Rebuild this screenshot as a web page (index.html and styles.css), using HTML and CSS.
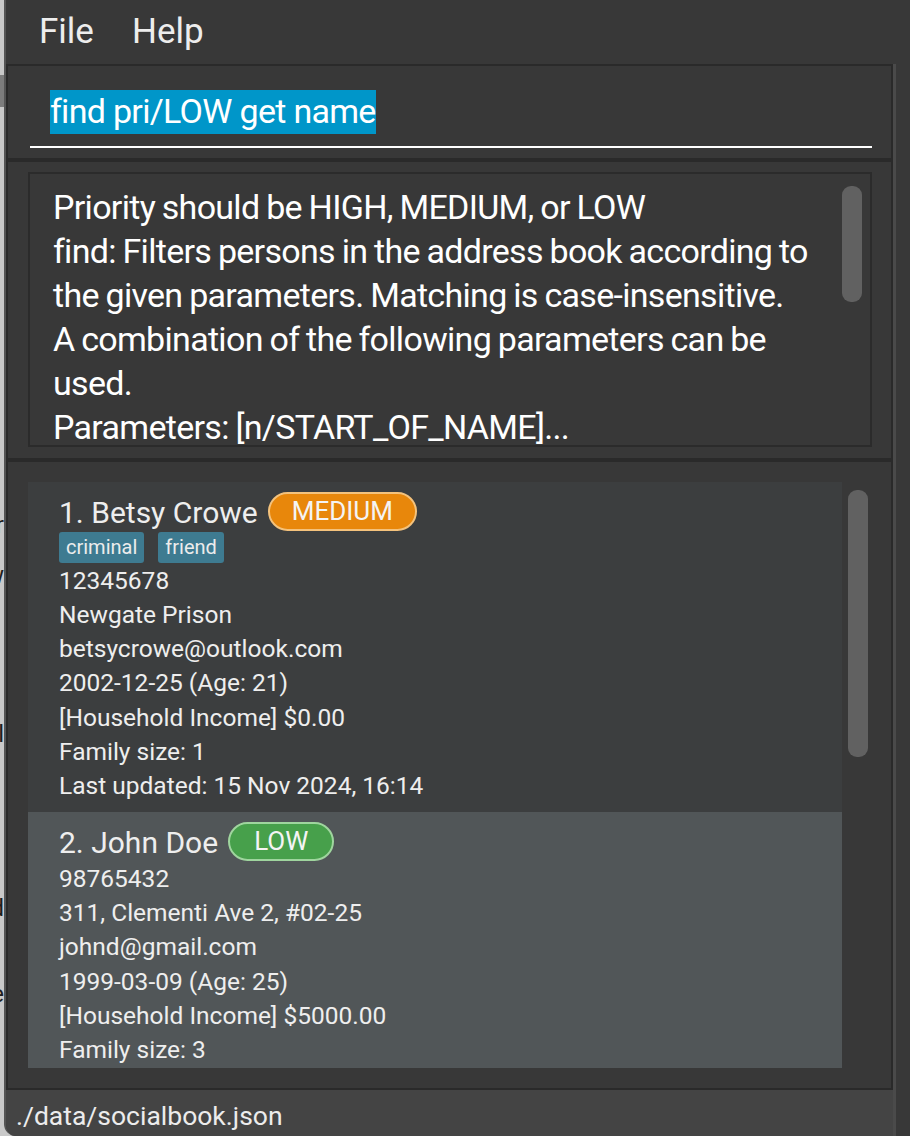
FILE: index.html
```html
<!DOCTYPE html>
<html>
<head>
<meta charset="utf-8">
<link rel="stylesheet" href="styles.css">
</head>
<body>
<div class="desk">
  <div class="behind">
    <div class="behind-block"></div>
    <div class="behind-line l1">er</div>
    <div class="behind-line l2">w</div>
    <div class="behind-line l3">l</div>
    <div class="behind-line l4">d</div>
    <div class="behind-line l5">e</div>
  </div>
  <div class="window">
    <div class="menubar">
      <span class="menu-item">File</span>
      <span class="menu-item">Help</span>
    </div>
    <div class="body-row">
      <div class="main">
        <div class="panels">
          <div class="cmd-panel">
            <div class="cmd-field"><span class="cmd-sel">find pri/LOW get name</span></div>
          </div>
          <div class="sep"></div>
          <div class="result-panel">
            <div class="result-box">
              <div class="result-text">Priority should be HIGH, MEDIUM, or LOW<br>find: Filters persons in the address book according to<br>the given parameters. Matching is case-insensitive.<br>A combination of the following parameters can be<br>used.<br>Parameters: [n/START_OF_NAME]...<br>[pri/PRIORITY]... [inc/INCOME]... [fs/FAMILY_SIZE]...<br>Example: find n/alice pri/HIGH</div>
              <div class="scroll-track"><div class="thumb result-thumb"></div></div>
            </div>
          </div>
          <div class="sep"></div>
          <div class="list-panel">
            <div class="list-view">
              <div class="cards">
                <div class="card even">
                  <div class="name-row"><span class="name">1. Betsy Crowe</span><span class="badge medium">MEDIUM</span></div>
                  <div class="tags"><span class="tag">criminal</span><span class="tag">friend</span></div>
                  <div class="lines">
                    <div class="line">12345678</div>
                    <div class="line">Newgate Prison</div>
                    <div class="line">betsycrowe@outlook.com</div>
                    <div class="line">2002-12-25 (Age: 21)</div>
                    <div class="line">[Household Income] $0.00</div>
                    <div class="line">Family size: 1</div>
                    <div class="line">Last updated: 15 Nov 2024, 16:14</div>
                  </div>
                </div>
                <div class="card odd">
                  <div class="name-row"><span class="name">2. John Doe</span><span class="badge low">LOW</span></div>
                  <div class="lines">
                    <div class="line">98765432</div>
                    <div class="line">311, Clementi Ave 2, #02-25</div>
                    <div class="line">johnd@gmail.com</div>
                    <div class="line">1999-03-09 (Age: 25)</div>
                    <div class="line">[Household Income] $5000.00</div>
                    <div class="line">Family size: 3</div>
                    <div class="line">Last updated: 15 Nov 2024, 16:14</div>
                  </div>
                </div>
              </div>
              <div class="scroll-track list-track"><div class="thumb list-thumb"></div></div>
            </div>
          </div>
        </div>
        <div class="status">./data/socialbook.json</div>
      </div>
      <div class="gutter"></div>
    </div>
  </div>
</div>
</body>
</html>
```
FILE: styles.css
```css
html, body {
  margin: 0;
  padding: 0;
  width: 910px;
  height: 1136px;
  overflow: hidden;
  background: #c9c9c9;
  font-family: Roboto, "Noto Sans", sans-serif;
}

.desk {
  display: flex;
  width: 910px;
  height: 1136px;
}

.behind {
  width: 4px;
  flex: none;
  overflow: hidden;
  background: #c9c9c9;
  color: #1e1e1e;
  font-size: 24px;
  line-height: 24px;
  direction: rtl;
  white-space: nowrap;
}
.behind-block {
  margin-top: 75px;
  height: 32px;
  background: #7d7d7d;
}
.behind-line { height: 24px; }
.l1 { margin-top: 406px; }
.l2 { margin-top: 26px; }
.l3 { margin-top: 135px; }
.l4 { margin-top: 150px; }
.l5 { margin-top: 62px; }

.window {
  flex: 1;
  display: flex;
  flex-direction: column;
  background: #383838;
  border-left: 2px solid #555555;
  border-bottom-left-radius: 12px;
  overflow: hidden;
}

.menubar {
  height: 64px;
  flex: none;
  display: flex;
  gap: 38px;
  padding-left: 33px;
  font-size: 35px;
  line-height: 64px;
  color: #ededed;
}

.body-row {
  flex: 1;
  display: flex;
  min-height: 0;
}

.main {
  width: 887px;
  flex: none;
  display: flex;
  flex-direction: column;
  border-right: 3px solid #4a4a4a;
}

.gutter { flex: 1; }

.panels {
  flex: none;
  display: flex;
  flex-direction: column;
  border: 2px solid #2a2a2a;
  box-sizing: border-box;
  height: 1026px;
}

.cmd-panel {
  height: 92px;
  flex: none;
  padding: 24px 19px 0 22px;
  box-sizing: border-box;
}
.cmd-field {
  height: 58px;
  box-sizing: border-box;
  border-bottom: 2px solid #ffffff;
  padding-left: 20px;
}
.cmd-sel {
  display: inline-block;
  height: 44px;
  line-height: 43px;
  font-size: 34px;
  color: #ffffff;
  background: #0096c9;
  letter-spacing: -0.7px;
}

.sep {
  height: 4px;
  flex: none;
  background: #2a2a2a;
}

.result-panel {
  height: 296px;
  flex: none;
  padding: 10px 19px 11px 20px;
  box-sizing: border-box;
}
.result-box {
  height: 100%;
  box-sizing: border-box;
  border: 2px solid #2b2b2b;
  display: flex;
  overflow: hidden;
}
.result-text {
  flex: 1;
  padding: 11px 0 0 23px;
  font-size: 34px;
  line-height: 44px;
  color: #ffffff;
  white-space: nowrap;
  overflow: hidden;
  letter-spacing: -0.7px;
  word-spacing: -1px;
}
.scroll-track {
  width: 20px;
  flex: none;
}
.result-box .scroll-track {
  margin-right: 8px;
  padding-top: 12px;
}
.thumb {
  width: 20px;
  background: #616161;
  border-radius: 9px;
}
.result-thumb { height: 116px; }

.list-panel {
  flex: 1;
  min-height: 0;
  padding: 20px 19px 20px 20px;
}
.list-view {
  height: 586px;
  display: flex;
  overflow: hidden;
}
.cards {
  width: 814px;
  flex: none;
}
.list-track {
  margin-left: 6px;
  padding-top: 8px;
}
.list-thumb { height: 267px; }

.card {
  padding: 10px 31px;
  color: #eeeeee;
}
.card.even {
  background: #3c3e3f;
  padding-bottom: 9px;
}
.card.odd { background: #515658; }

.name-row {
  height: 39px;
  display: flex;
  align-items: center;
  gap: 10px;
}
.name {
  font-size: 30px;
  line-height: 36px;
  padding-top: 3px;
}
.badge {
  height: 39px;
  box-sizing: border-box;
  border: 2px solid;
  border-radius: 20px;
  padding: 0 22px;
  font-size: 26px;
  line-height: 35px;
  color: #f4f4f4;
}
.badge.medium {
  background: #e8870b;
  border-color: #f4c27c;
}
.badge.low {
  background: #47a04b;
  border-color: #9fd59e;
  padding: 0 24px;
}

.tags {
  display: flex;
  gap: 14px;
  margin-top: 1px;
}
.tag {
  height: 31px;
  line-height: 31px;
  padding: 0 7px;
  background: #3e7b91;
  border-radius: 3px;
  font-size: 20px;
  color: #ececec;
}

.lines {
  padding-top: 1px;
}
.line {
  font-size: 24.5px;
  line-height: 34.15px;
  white-space: nowrap;
}

.status {
  flex: 1;
  background: #444444;
  padding: 9px 0 0 10px;
  font-size: 26.5px;
  line-height: 34px;
  color: #ececec;
}
```
